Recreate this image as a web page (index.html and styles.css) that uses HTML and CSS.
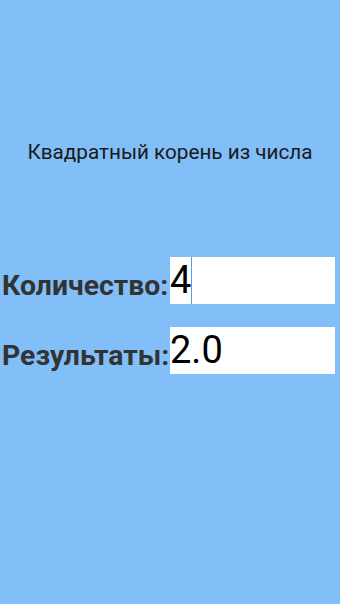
FILE: index.html
```html
<!DOCTYPE html>
<html lang="ru">
<head>
<meta charset="utf-8">
<link rel="stylesheet" href="styles.css">
</head>
<body>
<div class="screen">
  <div class="title">Квадратный корень из числа</div>
  <div class="row row-first">
    <div class="label">Количество:</div>
    <div class="field">4<span class="cursor"></span></div>
  </div>
  <div class="row row-second">
    <div class="label">Результаты:</div>
    <div class="field">2.0</div>
  </div>
</div>
</body>
</html>
```
FILE: styles.css
```css
html, body {
  margin: 0;
  padding: 0;
  background: #82bef7;
}
.screen {
  width: 340px;
  height: 604px;
  background: #82bef7;
  font-family: Roboto, "Noto Sans", sans-serif;
  display: flex;
  flex-direction: column;
}
.title {
  margin-top: 140px;
  font-size: 20.7px;
  line-height: 24px;
  color: #1a1a1a;
  text-align: center;
}
.row {
  display: flex;
  align-items: flex-start;
}
.row-first {
  margin-top: 93px;
}
.row-second {
  margin-top: 23px;
}
.label {
  width: 168px;
  padding-left: 2px;
  margin-top: 12px;
  font-size: 28.4px;
  line-height: 34px;
  font-weight: bold;
  color: #333333;
  white-space: nowrap;
}
.field {
  width: 165px;
  height: 47px;
  background: #ffffff;
  font-size: 38px;
  line-height: 47px;
  color: #000000;
  white-space: nowrap;
  overflow: hidden;
}
.cursor {
  display: inline-block;
  width: 1px;
  height: 47px;
  vertical-align: top;
  background: #5a9be6;
}
```
